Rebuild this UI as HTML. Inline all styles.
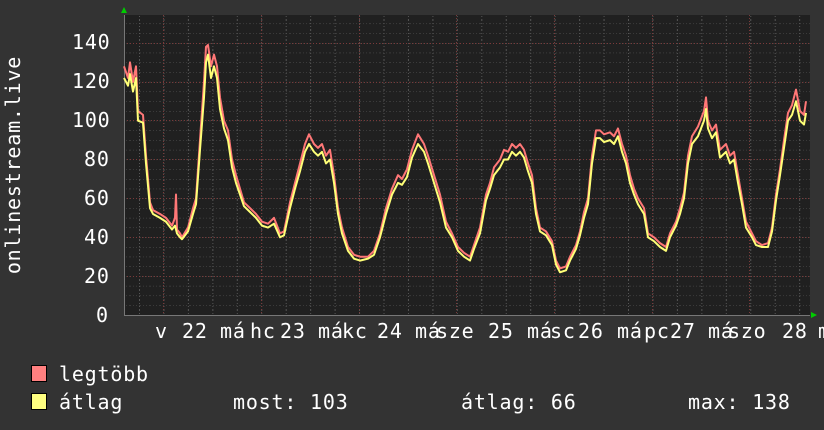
<!DOCTYPE html>
<html><head><meta charset="utf-8"><style>
html,body{margin:0;padding:0;background:#333;}
body{width:824px;height:430px;position:relative;overflow:hidden;font-family:"DejaVu Sans Mono","Liberation Mono",monospace;font-size:20px;color:#fff;}
.t{position:absolute;white-space:pre;line-height:20px;letter-spacing:0.8px;}
</style></head><body>
<svg width="824" height="430" style="position:absolute;left:0;top:0">
<defs>
<pattern id="hmin" x="0" y="315" width="10" height="9.715" patternUnits="userSpaceOnUse">
<line x1="0" y1="0" x2="10" y2="0" stroke="#555" stroke-width="1" stroke-dasharray="1,2"/>
</pattern>
<pattern id="vmin" x="139" y="0" width="24.45" height="10" patternUnits="userSpaceOnUse">
<line x1="0.5" y1="0" x2="0.5" y2="10" stroke="#555" stroke-width="1" stroke-dasharray="1,2"/>
</pattern>
</defs>
<rect x="124" y="15" width="686" height="301" fill="#202020"/>
<rect x="124" y="15" width="686" height="301" fill="url(#hmin)"/>
<rect x="124" y="15" width="686" height="301" fill="url(#vmin)"/>
<g stroke="#7a3a3a" stroke-width="1" stroke-dasharray="1,2">
<line x1="124" x2="810" y1="276.5" y2="276.5"/>
<line x1="124" x2="810" y1="237.5" y2="237.5"/>
<line x1="124" x2="810" y1="198.5" y2="198.5"/>
<line x1="124" x2="810" y1="159.5" y2="159.5"/>
<line x1="124" x2="810" y1="120.5" y2="120.5"/>
<line x1="124" x2="810" y1="82.5" y2="82.5"/>
<line x1="124" x2="810" y1="43.5" y2="43.5"/>
<line y1="15" y2="316" x1="163.5" x2="163.5"/>
<line y1="15" y2="316" x1="261.5" x2="261.5"/>
<line y1="15" y2="316" x1="359.5" x2="359.5"/>
<line y1="15" y2="316" x1="456.5" x2="456.5"/>
<line y1="15" y2="316" x1="554.5" x2="554.5"/>
<line y1="15" y2="316" x1="652.5" x2="652.5"/>
<line y1="15" y2="316" x1="749.5" x2="749.5"/>
</g>
<line x1="124" x2="810" y1="315.5" y2="315.5" stroke="#777"/>
<line x1="124.5" x2="124.5" y1="15" y2="316" stroke="#777"/>
<g transform="matrix(1,0,0,-1.943,0,315)" fill="none" stroke-width="2" stroke-linejoin="round">
<polyline vector-effect="non-scaling-stroke" stroke="#ff7777" points="124,128 128,122 130,130 133,120 136,128 138,105 143,103 146,82 150,58 153,54 160,52 166,50 172,46 175,50 176,62 177,44 180,42 182,40 188,45 193,55 196,60 200,90 204,120 206,138 208,139 211,128 214,134 217,128 220,112 224,100 228,95 232,80 236,72 240,65 244,58 250,55 256,52 262,48 268,47 274,50 280,42 284,43 290,58 295,68 300,78 305,88 309,93 314,88 318,86 322,88 326,82 330,85 334,72 338,55 342,45 348,35 354,31 360,30 368,30 374,33 380,42 386,55 392,65 398,72 402,70 407,75 412,85 418,93 424,88 428,82 434,72 440,62 446,48 452,42 458,35 464,32 470,30 474,36 480,45 486,62 490,68 494,76 500,80 504,85 508,84 512,88 516,86 520,88 524,85 528,78 532,72 536,55 540,45 546,43 552,38 556,28 560,24 566,25 570,30 576,36 580,43 584,53 588,60 592,82 596,95 600,95 604,93 610,94 614,92 618,96 622,88 626,82 630,72 634,65 638,60 644,55 648,42 654,40 660,37 666,35 670,42 676,48 680,55 684,63 688,82 692,92 698,97 704,105 706,112 708,100 712,95 716,98 720,85 726,88 730,82 734,84 738,72 742,60 746,48 752,42 756,38 762,36 768,37 772,45 776,62 780,75 784,90 788,104 792,108 796,116 800,105 804,103 806,110"/>
<polyline vector-effect="non-scaling-stroke" stroke="#ffff77" points="124,122 128,118 130,124 133,115 136,122 138,100 143,99 146,78 150,55 153,52 160,50 166,48 172,44 175,46 177,42 180,40 182,39 188,43 193,52 196,57 200,85 204,112 206,130 208,134 211,122 214,128 217,122 220,106 224,96 228,90 232,76 236,68 240,62 244,56 250,53 256,50 262,46 268,45 274,47 280,40 284,41 290,55 295,65 300,74 305,84 309,88 314,84 318,82 322,84 326,78 330,80 334,68 338,52 342,42 348,33 354,29 360,28 368,29 374,31 380,40 386,52 392,62 398,68 402,67 407,71 412,81 418,88 424,84 428,78 434,68 440,58 446,45 452,40 458,33 464,30 470,28 474,34 480,42 486,59 490,65 494,72 500,76 504,80 508,80 512,84 516,82 520,84 524,81 528,74 532,68 536,52 540,43 546,41 552,36 556,26 560,22 566,23 570,28 576,34 580,41 584,50 588,57 592,78 596,91 600,91 604,89 610,90 614,88 618,92 622,84 626,78 630,68 634,62 638,57 644,52 648,40 654,38 660,35 666,33 670,40 676,46 680,52 684,60 688,78 692,88 698,92 704,100 706,106 708,96 712,91 716,94 720,81 726,84 730,78 734,80 738,68 742,57 746,45 752,40 756,36 762,35 768,35 772,43 776,59 780,72 784,86 788,100 792,103 796,110 800,100 804,98 806,104"/>
</g>
<polygon points="121,13 127,13 124,7" fill="#00cc00"/>
<polygon points="811,312 811,318 817,315" fill="#00cc00"/>
<rect x="31.5" y="365.5" width="15" height="16" fill="#ff8080" stroke="#000"/>
<rect x="31.5" y="393.5" width="15" height="16" fill="#ffff80" stroke="#000"/>
<text x="13" y="165" transform="rotate(-90 13 165)" text-anchor="middle" dominant-baseline="central" fill="#fff" font-family="DejaVu Sans Mono, Liberation Mono, monospace" font-size="20" letter-spacing="0.8">onlinestream.live</text>
</svg>
<div class="t" style="left:72px;top:32px">140</div>
<div class="t" style="left:72px;top:71px">120</div>
<div class="t" style="left:72px;top:110px">100</div>
<div class="t" style="left:84px;top:149px">80</div>
<div class="t" style="left:84px;top:188px">60</div>
<div class="t" style="left:84px;top:227px">40</div>
<div class="t" style="left:84px;top:266px">20</div>
<div class="t" style="left:96px;top:305px">0</div>
<div class="t" style="left:155px;top:321px">v</div>
<div class="t" style="left:182px;top:321px">22</div>
<div class="t" style="left:220px;top:321px">má</div>
<div class="t" style="left:250px;top:321px">hc</div>
<div class="t" style="left:280px;top:321px">23</div>
<div class="t" style="left:318px;top:321px">má</div>
<div class="t" style="left:342px;top:321px">kc</div>
<div class="t" style="left:377px;top:321px">24</div>
<div class="t" style="left:415px;top:321px">má</div>
<div class="t" style="left:436px;top:321px">sze</div>
<div class="t" style="left:488px;top:321px">25</div>
<div class="t" style="left:527px;top:321px">má</div>
<div class="t" style="left:550px;top:321px">sc</div>
<div class="t" style="left:578px;top:321px">26</div>
<div class="t" style="left:617px;top:321px">má</div>
<div class="t" style="left:644px;top:321px">pc</div>
<div class="t" style="left:670px;top:321px">27</div>
<div class="t" style="left:708px;top:321px">má</div>
<div class="t" style="left:728px;top:321px">szo</div>
<div class="t" style="left:782px;top:321px">28</div>
<div class="t" style="left:818px;top:321px">m</div>
<div class="t" style="left:59px;top:364px">legtöbb</div>
<div class="t" style="left:59px;top:392px">átlag</div>
<div class="t" style="left:233px;top:392px">most: 103</div>
<div class="t" style="left:461px;top:392px">átlag: 66</div>
<div class="t" style="left:688px;top:392px">max: 138</div>
</body></html>
